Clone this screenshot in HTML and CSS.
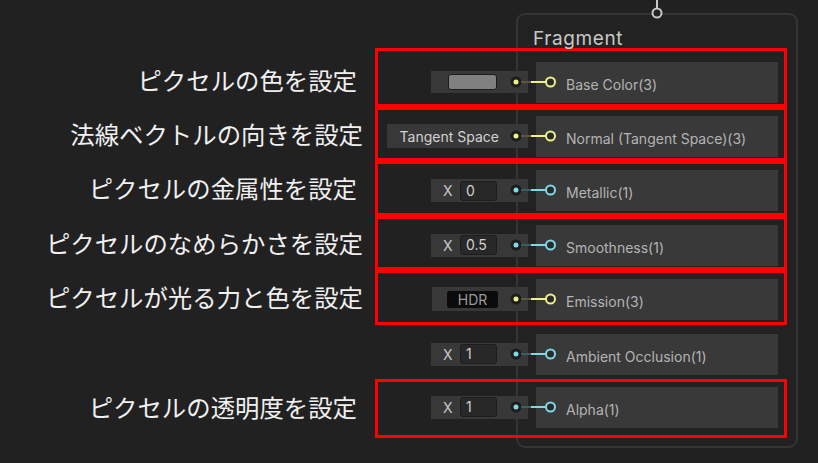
FILE: index.html
```html
<!DOCTYPE html>
<html lang="ja">
<head>
    <meta charset="UTF-8">
    <meta name="viewport" content="width=device-width, initial-scale=1.0">
    <title>Fragment</title>
    <link rel="stylesheet" href="styles.css">
</head>
<body>
    <div class="board">
        <div class="labels">
            <div class="label first gap">ピクセルの色を設定</div>
            <div class="label">法線ベクトルの向きを設定</div>
            <div class="label gap">ピクセルの金属性を設定</div>
            <div class="label">ピクセルのなめらかさを設定</div>
            <div class="label">ピクセルが光る力と色を設定</div>
            <div class="label"></div>
            <div class="label last gap">ピクセルの透明度を設定</div>
        </div>

        <div class="node">
            <!-- 上の入力ポート -->
            <svg class="top-port" width="14" height="20" viewBox="0 0 14 20">
                <line x1="7" y1="0" x2="7" y2="8.5" stroke="#c8c8c8" stroke-width="2"/>
                <circle cx="7" cy="13" r="4.5" fill="#222" stroke="#c8c8c8" stroke-width="2"/>
            </svg>
            <div class="node-title">Fragment</div>

            <div class="row marked first">
                <div class="field swatch-field"><span class="swatch"></span></div>
                <svg class="wire" width="47" height="14" viewBox="0 0 47 14">
                    <circle cx="6" cy="7" r="5.5" fill="#1c1c1c"/>
                    <circle cx="6" cy="7" r="2.5" fill="#eef08a"/>
                    <line x1="11" y1="7" x2="21" y2="7" stroke="#5a5a44" stroke-width="2"/>
                    <line x1="21" y1="7" x2="36" y2="7" stroke="#eef08a" stroke-width="2"/>
                    <circle cx="40.5" cy="7" r="4.5" fill="#2a2a2a" stroke="#eef08a" stroke-width="2"/>
                </svg>
                <div class="slot">Base Color(3)</div>
            </div>

            <div class="row marked">
                <div class="field text-field">Tangent Space</div>
                <svg class="wire" width="47" height="14" viewBox="0 0 47 14">
                    <circle cx="6" cy="7" r="5.5" fill="#1c1c1c"/>
                    <circle cx="6" cy="7" r="2.5" fill="#eef08a"/>
                    <line x1="11" y1="7" x2="21" y2="7" stroke="#5a5a44" stroke-width="2"/>
                    <line x1="21" y1="7" x2="36" y2="7" stroke="#eef08a" stroke-width="2"/>
                    <circle cx="40.5" cy="7" r="4.5" fill="#2a2a2a" stroke="#eef08a" stroke-width="2"/>
                </svg>
                <div class="slot">Normal (Tangent Space)(3)</div>
            </div>

            <div class="row marked">
                <div class="field x-field"><span class="axis">X</span><span class="num">0</span></div>
                <svg class="wire" width="47" height="14" viewBox="0 0 47 14">
                    <circle cx="6" cy="7" r="5.5" fill="#1c1c1c"/>
                    <circle cx="6" cy="7" r="2.5" fill="#7fd8e6"/>
                    <line x1="11" y1="7" x2="21" y2="7" stroke="#3d5c60" stroke-width="2"/>
                    <line x1="21" y1="7" x2="36" y2="7" stroke="#7fd8e6" stroke-width="2"/>
                    <circle cx="40.5" cy="7" r="4.5" fill="#2a2a2a" stroke="#7fd8e6" stroke-width="2"/>
                </svg>
                <div class="slot">Metallic(1)</div>
            </div>

            <div class="row marked">
                <div class="field x-field"><span class="axis">X</span><span class="num">0.5</span></div>
                <svg class="wire" width="47" height="14" viewBox="0 0 47 14">
                    <circle cx="6" cy="7" r="5.5" fill="#1c1c1c"/>
                    <circle cx="6" cy="7" r="2.5" fill="#7fd8e6"/>
                    <line x1="11" y1="7" x2="21" y2="7" stroke="#3d5c60" stroke-width="2"/>
                    <line x1="21" y1="7" x2="36" y2="7" stroke="#7fd8e6" stroke-width="2"/>
                    <circle cx="40.5" cy="7" r="4.5" fill="#2a2a2a" stroke="#7fd8e6" stroke-width="2"/>
                </svg>
                <div class="slot">Smoothness(1)</div>
            </div>

            <div class="row marked">
                <div class="field hdr-field"><span class="hdr">HDR</span></div>
                <svg class="wire" width="47" height="14" viewBox="0 0 47 14">
                    <circle cx="6" cy="7" r="5.5" fill="#1c1c1c"/>
                    <circle cx="6" cy="7" r="2.5" fill="#eef08a"/>
                    <line x1="11" y1="7" x2="21" y2="7" stroke="#5a5a44" stroke-width="2"/>
                    <line x1="21" y1="7" x2="36" y2="7" stroke="#eef08a" stroke-width="2"/>
                    <circle cx="40.5" cy="7" r="4.5" fill="#2a2a2a" stroke="#eef08a" stroke-width="2"/>
                </svg>
                <div class="slot">Emission(3)</div>
            </div>

            <div class="row">
                <div class="field x-field"><span class="axis">X</span><span class="num">1</span></div>
                <svg class="wire" width="47" height="14" viewBox="0 0 47 14">
                    <circle cx="6" cy="7" r="5.5" fill="#1c1c1c"/>
                    <circle cx="6" cy="7" r="2.5" fill="#7fd8e6"/>
                    <line x1="11" y1="7" x2="21" y2="7" stroke="#3d5c60" stroke-width="2"/>
                    <line x1="21" y1="7" x2="36" y2="7" stroke="#7fd8e6" stroke-width="2"/>
                    <circle cx="40.5" cy="7" r="4.5" fill="#2a2a2a" stroke="#7fd8e6" stroke-width="2"/>
                </svg>
                <div class="slot">Ambient Occlusion(1)</div>
            </div>

            <div class="row marked last">
                <div class="field x-field"><span class="axis">X</span><span class="num">1</span></div>
                <svg class="wire" width="47" height="14" viewBox="0 0 47 14">
                    <circle cx="6" cy="7" r="5.5" fill="#1c1c1c"/>
                    <circle cx="6" cy="7" r="2.5" fill="#7fd8e6"/>
                    <line x1="11" y1="7" x2="21" y2="7" stroke="#3d5c60" stroke-width="2"/>
                    <line x1="21" y1="7" x2="36" y2="7" stroke="#7fd8e6" stroke-width="2"/>
                    <circle cx="40.5" cy="7" r="4.5" fill="#2a2a2a" stroke="#7fd8e6" stroke-width="2"/>
                </svg>
                <div class="slot">Alpha(1)</div>
            </div>
        </div>
    </div>
</body>
</html>
```

FILE: styles.css
```css
* {
    box-sizing: border-box;
}

body {
    margin: 0;
    background-color: #212121;
    font-family: Inter, "Noto Sans", sans-serif;
    overflow: hidden;
}

.board {
    display: flex;
    width: 818px;
    height: 463px;
}

/* 左側の説明ラベル */
.labels {
    width: 375px;
    flex: 0 0 375px;
    padding-top: 48px;
    padding-right: 12px;
    text-align: right;
}

.label {
    height: 54.4px;
    padding-top: 8px;
    line-height: 37px;
    font-family: "Noto Sans CJK JP", sans-serif;
    font-size: 24.4px;
    color: #f0f0f0;
    white-space: nowrap;
}

.label.first {
    height: 59px;
    padding-top: 13px;
}

.label.last {
    height: 59px;
    padding-top: 9px;
}

.label.gap {
    padding-right: 6px;
}

/* Fragment ノード */
.node {
    position: relative;
    margin-top: 13px;
    margin-left: 141px;
    width: 282px;
    height: 435px;
    background: #222222;
    border: 2px solid #353535;
    border-radius: 9px;
}

.top-port {
    position: absolute;
    left: 132px;
    top: -15px;
}

.node-title {
    padding: 13px 0 0 15px;
    height: 33px;
    line-height: 21px;
    font-size: 19px;
    letter-spacing: 0.6px;
    color: #c8c8c8;
}

.row {
    display: flex;
    align-items: flex-start;
    justify-content: flex-end;
    height: 54.4px;
    margin-left: -143px;
    margin-right: 9px;
    padding: 6px 6px 0 0;
    border: 3px solid transparent;
}

.row.first {
    height: 59px;
    padding-top: 11px;
}

.row.last {
    height: 59px;
    padding-top: 5px;
}

.row.marked {
    border-color: #ff0000;
}

.field {
    display: flex;
    align-items: center;
    height: 23px;
    margin-top: 9px;
    padding-right: 31px;
    background: #383838;
    font-size: 14px;
    color: #cfcfcf;
}

.swatch-field {
    height: 22px;
    padding-left: 17px;
}

.swatch {
    width: 49px;
    height: 16px;
    background: #808080;
    border: 1px solid #1c1c1c;
    border-radius: 3px;
}

.text-field {
    height: 24px;
    margin-top: 8px;
    padding-left: 13px;
    padding-right: 29px;
    color: #d2d2d2;
}

.x-field {
    padding-left: 12px;
}

.axis {
    width: 17px;
    color: #c8c8c8;
}

.num {
    width: 37px;
    height: 20px;
    line-height: 18px;
    padding-left: 5px;
    background: #282828;
    border: 1px solid #1d1d1d;
    border-radius: 3px;
    color: #d0d0d0;
}

.hdr-field {
    height: 24px;
    margin-top: 8px;
    padding-left: 15px;
    padding-right: 30px;
}

.hdr {
    width: 51px;
    height: 17px;
    line-height: 17px;
    background: #0b0b0b;
    border-radius: 2px;
    text-align: center;
    color: #9a9a9a;
}

.wire {
    position: relative;
    z-index: 1;
    margin-left: -18px;
    margin-top: 13px;
    flex: 0 0 47px;
}

.slot {
    flex: 0 0 242px;
    height: 41px;
    margin-left: -21px;
    padding: 4px 0 0 30px;
    line-height: 37px;
    background: #393939;
    font-size: 14px;
    color: #b4b4b4;
}
```
